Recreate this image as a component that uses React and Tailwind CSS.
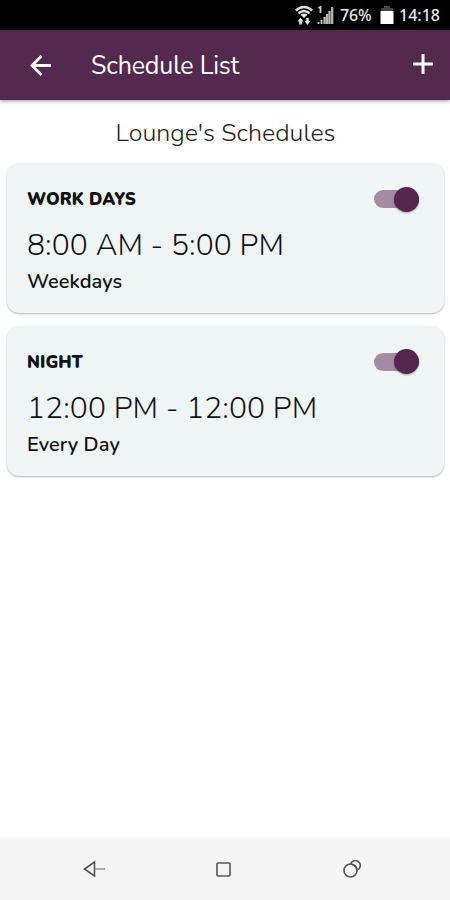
const schedules = [
  { name: 'WORK DAYS', time: '8:00 AM - 5:00 PM', days: 'Weekdays' },
  { name: 'NIGHT', time: '12:00 PM - 12:00 PM', days: 'Every Day' },
]

function StatusBar() {
  return (
    <div className="flex h-[30px] items-center justify-end bg-black pr-[9px] font-['Noto_Sans',sans-serif] text-[16px] font-medium text-[#e8e8e8]">
      {/* Wifi with up / down arrows */}
      <svg className="mr-[4px] h-5 w-[18px]" viewBox="0 0 18 20" fill="none" stroke="#e0e0e0">
        <path d="M.8 5.500Q9-1.500 17.200 5.500" strokeWidth="2.400" />
        <path d="M3.400 8.200Q9 3.600 14.600 8.200" strokeWidth="2.400" />
        <path d="M5.500 9.800Q9 7 12.500 9.800L9 13z" fill="#e8e8e8" stroke="none" />
        <path d="M5.500 19.500v-4M12.500 13v4" strokeWidth="2.600" />
        <path d="M2.500 16.500l3-4 3 4zM9.500 16l3 4 3-4z" fill="#e8e8e8" stroke="none" />
      </svg>
      <svg className="mr-[6px] h-5 w-[17px]" viewBox="0 0 17 20" fill="none" stroke="#cfcfcf">
        <path d="M1.500 3 3.500 2v6M1.500 19v-2M4.500 19v-4" strokeWidth="1.800" />
        <path d="M7.500 19v-7M10 19V9M12.500 19V6M15.200 19V2" strokeWidth="2.300" stroke="#b5b5b5" />
      </svg>
      <span className="w-[32px] whitespace-nowrap tracking-[-0.1px]">76%</span>
      <svg className="mr-[5px] ml-[8px] h-5 w-[14px]" viewBox="0 0 14 20">
        <path d="M4 1h6v2h3v4H1V3h3z" fill="#444" />
        <path d="M.5 6h13v13H.5z" fill="#fff" />
      </svg>
      <span className="w-[42px] whitespace-nowrap">14:18</span>
    </div>
  )
}

function Toggle() {
  return (
    <div className="flex h-[18px] w-[45px] items-center justify-end rounded-full bg-[#a48ba3]">
      <div className="h-[25px] w-[25px] shrink-0 rounded-full bg-[#54264f] shadow-[0_1px_2px_rgba(0,0,0,0.35)]" />
    </div>
  )
}

function ScheduleCard({ schedule }) {
  return (
    <div className="h-[150px] rounded-[12px] bg-[#eff4f5] pt-[23px] pr-[25px] pl-[20px] text-[#111] shadow-[0_1px_2px_rgba(0,0,0,0.3)]">
      <div className="flex h-[26px] items-center justify-between">
        <div className="pt-[2px] text-[17px] font-black tracking-[0.1px]">{schedule.name}</div>
        <Toggle />
      </div>
      <div className="mt-[14px] h-[40px] text-[30px] leading-[40px] font-light tracking-[0.1px] whitespace-nowrap">
        {schedule.time}
      </div>
      <div className="mt-[2px] text-[20px] leading-[28px] font-semibold tracking-[0.05px]">{schedule.days}</div>
    </div>
  )
}

export default function App() {
  return (
    <div className="flex h-[900px] w-[450px] flex-col overflow-hidden bg-white font-[Nunito,Lato,sans-serif]">
      <StatusBar />
      <header className="flex h-[70px] shrink-0 items-center bg-[#54294f] pr-[17px] pl-[30px] text-white shadow-[0_1px_4px_rgba(0,0,0,0.4)]">
        <svg className="h-[22px] w-[22px]" viewBox="0 0 22 22" fill="none" stroke="currentColor" strokeWidth="2.800">
          <path d="M21 11.500H2.500M11.500 2 2 11.500l9.500 9.500" />
        </svg>
        <h1 className="mt-[1px] ml-[39px] text-[25px] leading-[30px] tracking-[-0.15px]">Schedule List</h1>
        <svg className="mb-[3px] ml-auto h-[20px] w-[20px]" viewBox="0 0 20 20" fill="none" stroke="currentColor" strokeWidth="3">
          <path d="M10 0v20M0 10h20" />
        </svg>
      </header>

      <main className="flex-1 pr-[6px] pl-[7px]">
        <h2 className="flex h-[63px] items-center justify-center pt-[4px] text-[25px] font-light text-[#222]">
          Lounge's Schedules
        </h2>
        <div className="flex flex-col gap-[12.5px]">
          {schedules.map((s) => (
            <ScheduleCard key={s.name} schedule={s} />
          ))}
        </div>
      </main>

      {/* System navigation */}
      <nav className="flex h-[62px] shrink-0 items-center bg-[#f5f5f5] pl-[83px] text-[#555]">
        <svg className="h-[18px] w-[23px]" viewBox="0 0 23 18" fill="none" stroke="currentColor" strokeWidth="1.600">
          <path d="M1.500 9 11.500 2v14z" />
          <path d="M12 9h10" stroke="#999" />
        </svg>
        <svg className="ml-[110px] h-[15px] w-[15px]" viewBox="0 0 15 15" fill="none" stroke="currentColor" strokeWidth="1.600">
          <rect x="1" y="1" width="13" height="13" rx="1" />
        </svg>
        <svg className="ml-[112px] h-[18px] w-[18px]" viewBox="0 0 18 18" fill="none" stroke="currentColor" strokeWidth="1.600">
          <circle cx="7.500" cy="10.500" r="6.500" />
          <path d="M7.500 4A5 5 0 1 1 14 10.200" />
          <path d="M7.500 4Q13 5 14 10.200" />
        </svg>
      </nav>
    </div>
  )
}
